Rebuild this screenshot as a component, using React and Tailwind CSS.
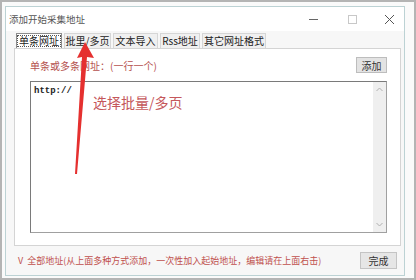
import React from "react";

const cjk = { fontFamily: '"Noto Sans CJK SC", "Microsoft YaHei", sans-serif' };

function Tab({ children, active, w }) {
  return (
    <div
      className={
        "flex h-[15px] items-center justify-center border border-b-0 text-[10px] leading-none text-[#222] " +
        (active ? "border-[#8c8c8c] bg-white" : "border-[#d6d6d6] bg-[#f0f0f0]")
      }
      style={{ width: w }}
    >
      <span className={active ? "outline outline-1 outline-dotted outline-[#555] px-[1px]" : ""}>{children}</span>
    </div>
  );
}

export default function App() {
  return (
    <div
      className="relative h-[280px] w-[416px] overflow-hidden border-2 border-[#b4b4b4] bg-[#fafafa]"
      style={cjk}
    >
      <div className="ml-[3px] mt-[4px] flex h-[270px] w-[400px] flex-col border border-[#bcd2d4] bg-[#f7f7f7]">
        {/* title bar */}
        <div className="flex h-[24px] items-center bg-white pl-[3px]">
          <span className="text-[9.5px] text-[#555]">添加开始采集地址</span>
          <div className="ml-auto flex items-center">
            <span className="mr-[30px] block h-[1px] w-[9px] bg-[#666]"></span>
            <span className="mr-[27px] block h-[9px] w-[9px] border border-[#c8c8c8]"></span>
            <svg width="11" height="11" viewBox="0 0 11 11" className="mr-[9px]">
              <path d="M1 1L10 10M10 1L1 10" stroke="#555" strokeWidth="1" />
            </svg>
          </div>
        </div>
        {/* tabs */}
        <div className="mt-[2px] flex h-[15px] items-end gap-[2px] pl-[10px]">
          <Tab active w={46}>单条网址</Tab>
          <Tab w={47}>批里/多页</Tab>
          <Tab w={45}>文本导入</Tab>
          <Tab w={40}>Rss地址</Tab>
          <Tab w={64}>其它网址格式</Tab>
        </div>
        {/* panel */}
        <div className="ml-[8px] flex h-[198px] w-[387px] flex-col border border-[#d4d4d4] bg-white pb-[12px] pl-[15px] pr-[13px]">
          <div className="flex h-[32px] items-center">
            <span className="text-[10px] text-[#b5514e]">单条或多条网址：(一行一个)</span>
            <div className="ml-auto flex h-[16px] w-[31px] items-center justify-center border border-[#bdbdbd] bg-[#e3e3e3] text-[10px] text-[#333]">
              添加
            </div>
          </div>
          <div className="flex flex-1 border border-[#7a7a7a] border-r-[#a0a0a0] border-b-[#a0a0a0]">
            <div className="relative flex-1">
              <span
                className="absolute left-[3px] top-[3px] text-[9px] font-bold text-[#222]"
                style={{ fontFamily: '"Liberation Mono", "DejaVu Sans Mono", monospace' }}
              >
                http://
              </span>
              <span className="absolute left-[62px] top-[10px] text-[14px] text-[#c5585c]">选择批量/多页</span>
            </div>
            <div className="flex w-[13px] flex-col items-center justify-between bg-[#efefef] py-[5px]">
              <svg width="7" height="5" viewBox="0 0 7 5">
                <path d="M0.5 4L3.5 1L6.5 4" stroke="#b0b0b0" fill="none" />
              </svg>
              <svg width="7" height="5" viewBox="0 0 7 5">
                <path d="M0.5 1L3.5 4L6.5 1" stroke="#b0b0b0" fill="none" />
              </svg>
            </div>
          </div>
        </div>
        {/* bottom */}
        <div className="flex flex-1 items-center pl-[12px] pr-[7px]">
          <span className="text-[9px] text-[#c0504d]">V&nbsp;&nbsp;全部地址(从上面多种方式添加，一次性加入起始地址，编辑请在上面右击)</span>
          <div className="ml-auto flex h-[17px] w-[37px] items-center justify-center border border-[#c4c4c4] bg-[#e6e6e6] text-[10px] text-[#333]">
            完成
          </div>
        </div>
      </div>
      {/* red annotation arrow */}
      <svg className="absolute left-0 top-0" width="416" height="280" viewBox="0 0 416 280">
        <polygon
          points="83,40 92,56 85,55 75,172 73,172 80,55 75,56"
          fill="#e5302f"
        />
      </svg>
    </div>
  );
}
